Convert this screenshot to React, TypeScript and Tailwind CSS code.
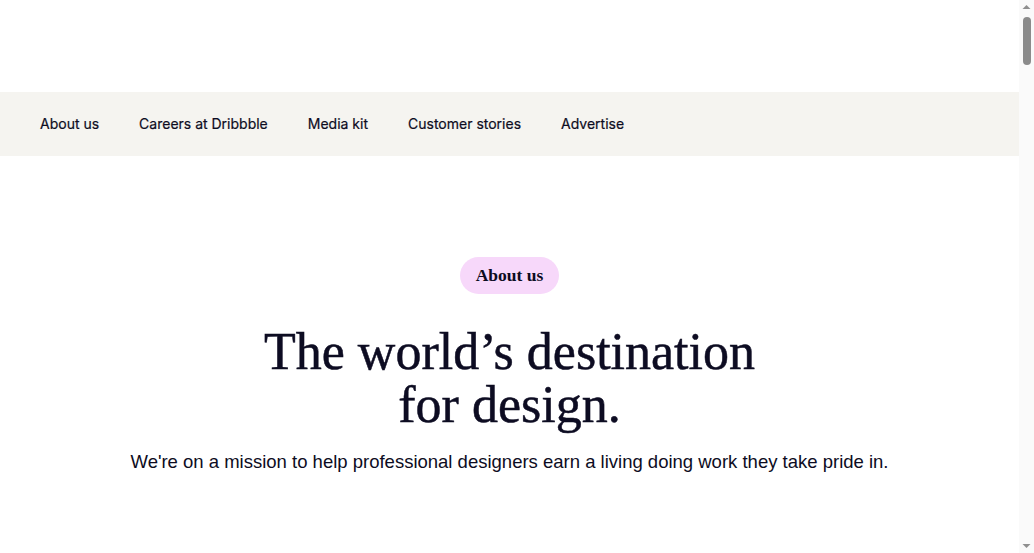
import React from "react";

const navItems = ["About us", "Careers at Dribbble", "Media kit", "Customer stories", "Advertise"];

function Scrollbar() {
  return (
    <aside className="flex w-[15px] shrink-0 flex-col items-center bg-[#fafafa]">
      <svg width="15" height="15" viewBox="0 0 15 15" className="shrink-0">
        <path d="M3.5 9 L7.5 5 L11.5 9 Z" fill="#8f8f8f" />
      </svg>
      <div className="mt-[2px] h-[48px] w-[8px] rounded-full bg-[#8b8b8b]" />
      <div className="flex-1" />
      <svg width="15" height="15" viewBox="0 0 15 15" className="shrink-0">
        <path d="M3.5 6 L7.5 10 L11.5 6 Z" fill="#8f8f8f" />
      </svg>
    </aside>
  );
}

export default function App() {
  return (
    <div className="flex h-screen overflow-hidden bg-white text-[#0d0c22]">
      <main className="min-w-0 flex-1 overflow-hidden">
        <header className="h-[92px] bg-white" />
        <nav className="flex h-16 items-center gap-10 bg-[#f5f4f0] pl-10">
          {navItems.map((n) => (
            <a key={n} className="font-['Inter','Liberation_Sans',sans-serif] text-[14px] leading-5 text-[#0d0c22] [-webkit-text-stroke:0.2px_#0d0c22]">
              {n}
            </a>
          ))}
        </nav>
        <section className="flex flex-col items-center pt-[101px]">
          <span className="flex h-[37px] items-center rounded-full bg-[#f7d8fa] px-4 font-['Liberation_Serif',serif] text-[17.5px] font-bold text-[#0d0c22]">
            About us
          </span>
          <h1 className="mt-[31px] text-center font-['Liberation_Serif',serif] text-[52px] leading-[53px] text-[#0d0c22] [-webkit-text-stroke:0.5px_#0d0c22]">
            The world’s destination
            <br />
            for design.
          </h1>
          <p className="mt-[17px] text-center font-['Liberation_Sans',sans-serif] text-[18.5px] leading-7 text-[#0d0c22]">
            We're on a mission to help professional designers earn a living doing work they take pride in.
          </p>
        </section>
      </main>
      <Scrollbar />
    </div>
  );
}
